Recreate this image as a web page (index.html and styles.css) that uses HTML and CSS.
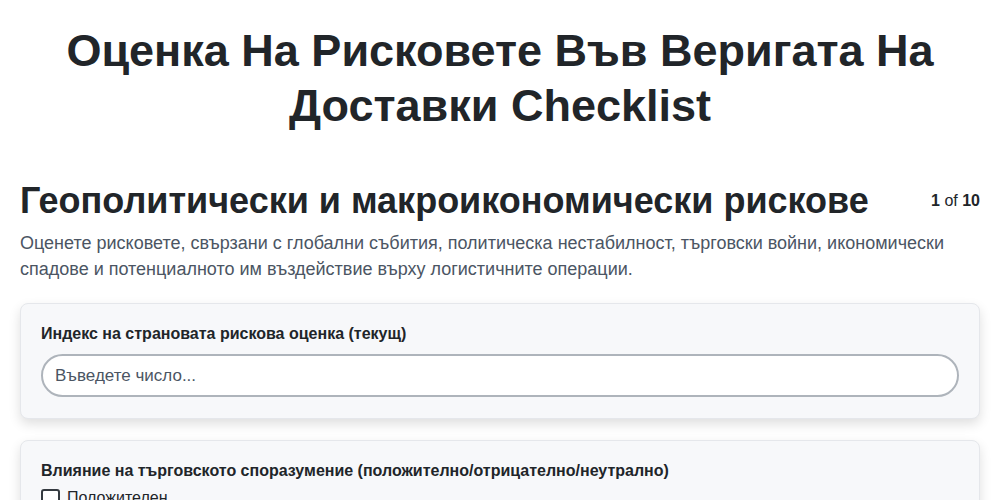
FILE: index.html
```html
<!DOCTYPE html>
<html lang="bg">
<head>
    <meta charset="UTF-8">
    <meta name="viewport" content="width=device-width, initial-scale=1.0">
    <title>Оценка На Рисковете Във Веригата На Доставки Checklist</title>
    <link rel="stylesheet" href="styles.css">
</head>
<body>
    <div class="container">
        <h1 class="title">Оценка На Рисковете Във Веригата На Доставки Checklist</h1>

        <div class="section-head">
            <h2 class="section-title">Геополитически и макроикономически рискове</h2>
            <div class="counter"><b>1</b> of <b>10</b></div>
        </div>
        <p class="section-desc">Оценете рисковете, свързани с глобални събития, политическа нестабилност, търговски войни, икономически спадове и потенциалното им въздействие върху логистичните операции.</p>

        <div class="card">
            <label class="card-label" for="riskIndex">Индекс на страновата рискова оценка (текущ)</label>
            <input class="card-input" type="number" id="riskIndex" placeholder="Въведете число...">
        </div>

        <div class="card">
            <div class="card-label">Влияние на търговското споразумение (положително/отрицателно/неутрално)</div>
            <label class="option"><input type="checkbox"> <span>Положителен</span></label>
            <label class="option"><input type="checkbox"> <span>Отрицателен</span></label>
            <label class="option"><input type="checkbox"> <span>Неутрален</span></label>
        </div>
    </div>
</body>
</html>
```

FILE: styles.css
```css
body {
    font-family: "Liberation Sans", Arial, sans-serif;
    margin: 0;
    padding: 0;
    background-color: #fff;
    color: #212529;
}
.container {
    padding: 23px 20px 20px;
}
.title {
    text-align: center;
    font-size: 45px;
    line-height: 55px;
    margin: 0 0 46px;
    color: #212529;
}
.section-head {
    display: flex;
    justify-content: space-between;
    align-items: center;
}
.section-title {
    font-size: 36px;
    line-height: 43px;
    margin: 0;
    color: #212529;
}
.counter {
    font-size: 16px;
    color: #212529;
}
.section-desc {
    font-size: 18px;
    line-height: 26px;
    color: #4b5563;
    margin: 8px 0 21px;
}
.card {
    background-color: #f7f8fa;
    border: 1px solid #e5e7eb;
    border-radius: 8px;
    box-shadow: 0 5px 12px rgba(0, 0, 0, 0.13);
    padding: 20px 20px 21px;
    margin-bottom: 21px;
}
.card-label {
    display: block;
    font-size: 16px;
    font-weight: bold;
    line-height: 20px;
    margin-bottom: 10px;
    color: #212529;
}
.card-input {
    display: block;
    box-sizing: border-box;
    width: 100%;
    height: 43px;
    padding: 0 12px;
    border: 2px solid #aeb4bb;
    border-radius: 22px;
    background-color: #fff;
    font-family: inherit;
    font-size: 17px;
    color: #212529;
    outline: none;
}
.card-input::placeholder {
    color: #4b5563;
}
.option {
    display: flex;
    align-items: center;
    gap: 7px;
    font-size: 16px;
    line-height: 22px;
    margin-top: -4px;
}
.option input {
    appearance: none;
    width: 19px;
    height: 19px;
    margin: 0;
    border: 2px solid #343a40;
    border-radius: 3px;
    background: #fff;
}
```
